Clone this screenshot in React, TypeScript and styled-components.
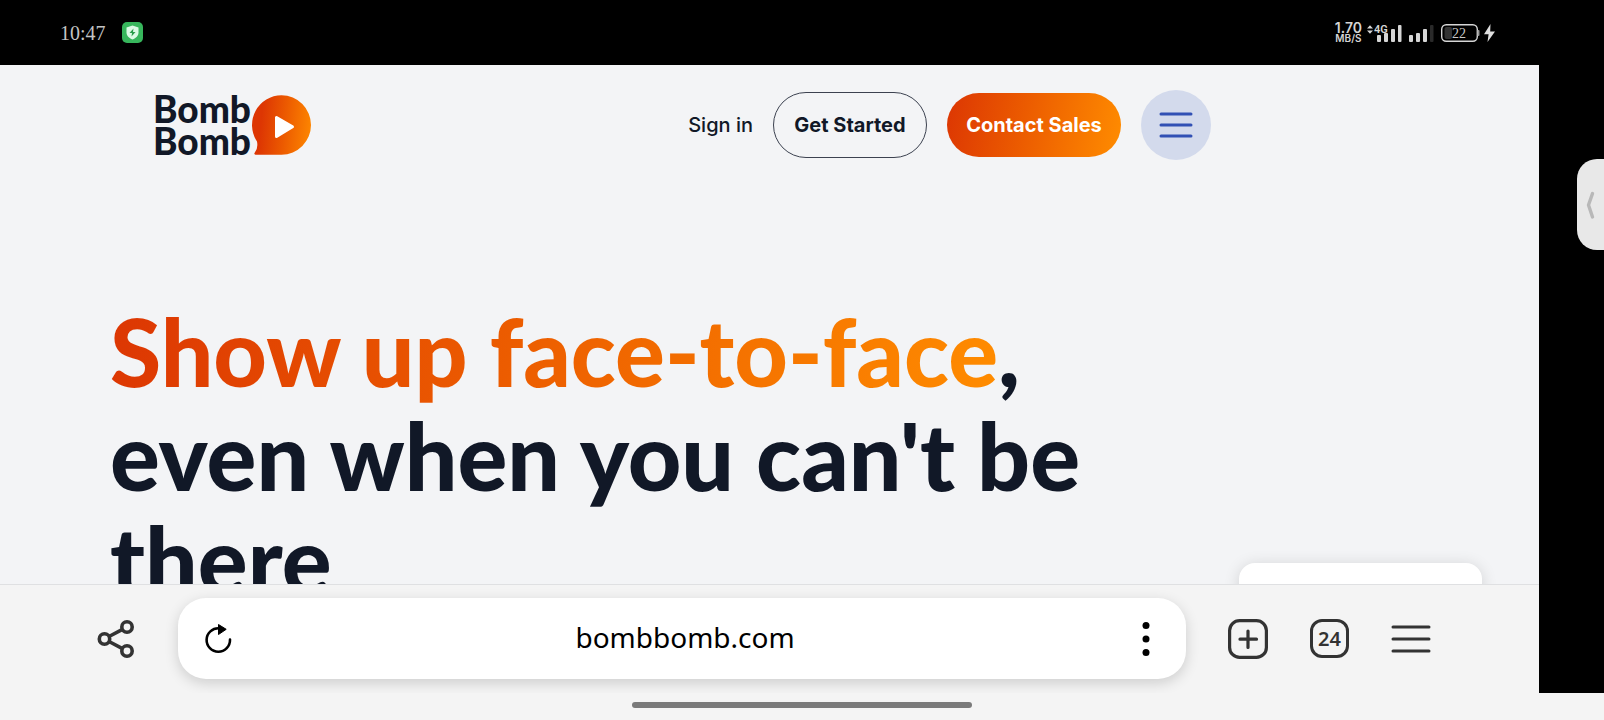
import React from "react";
import styled, { createGlobalStyle } from "styled-components";

const GlobalStyle = createGlobalStyle`
  *, *::before, *::after { box-sizing: border-box; }
  html, body { margin: 0; padding: 0; background: #f4f4f4; }
  button, input { font: inherit; color: inherit; }
  svg { display: block; flex: none; }
`;

const ink = "#111827";
const flame = "linear-gradient(100deg, #dc3603 0%, #ec5c00 45%, #ff8c00 100%)";

const Device = styled.div`
  display: flex;
  flex-direction: column;
  height: 100vh;
  min-height: 480px;
  overflow: hidden;
  background: #f4f4f4;
  font-family: "Noto Sans", sans-serif;
`;

const StatusBar = styled.header`
  flex: none;
  display: flex;
  align-items: center;
  justify-content: space-between;
  height: 65px;
  padding: 0 108px 0 60px;
  background: #000;
  color: #d4d4d4;
`;

const StatusGroup = styled.div<{ $gap: number }>`
  display: flex;
  align-items: center;
  gap: ${(p) => p.$gap}px;
`;

const Clock = styled.time`
  font: 20px/24px "Liberation Serif", serif;
  color: #c4c4c4;
`;

const Speed = styled.div`
  display: flex;
  flex-direction: column;
  align-items: center;
  font-family: Inter, sans-serif;
  font-weight: 600;
`;

const SpeedValue = styled.span`
  font-size: 14px;
  line-height: 11px;
`;

const SpeedUnit = styled.span`
  font-size: 10px;
  line-height: 10px;
`;

const Body = styled.div`
  flex: 1;
  display: flex;
  min-height: 0;
`;

const Browser = styled.div`
  flex: 1;
  display: flex;
  flex-direction: column;
  min-width: 0;
`;

const Rail = styled.aside`
  flex: none;
  display: flex;
  justify-content: flex-end;
  align-items: flex-start;
  width: 65px;
  padding-top: 94px;
  background: #000;
`;

const EdgeHandle = styled.button`
  display: flex;
  align-items: center;
  width: 27px;
  height: 91px;
  padding: 0 0 0 9px;
  border: 0;
  border-radius: 20px 0 0 20px;
  background: #e8e8e8;
`;

const Page = styled.main`
  flex: 1;
  position: relative;
  min-height: 0;
  overflow: hidden;
  background: #f3f4f6;
  color: ${ink};
`;

const SiteHeader = styled.div`
  display: flex;
  align-items: center;
  justify-content: space-between;
  max-width: 1211px;
  padding: 25px 0 0 153px;
`;

const Logo = styled.a`
  display: flex;
  align-items: center;
  gap: 2px;
  color: ${ink};
  text-decoration: none;
`;

const LogoText = styled.span`
  display: flex;
  flex-direction: column;
  width: 97px;
  font: 900 37px/32px Lato, sans-serif;
`;

const Nav = styled.nav`
  display: flex;
  align-items: center;
  gap: 20px;
  font: 500 20px/24px Inter, sans-serif;
`;

const NavLink = styled.a`
  color: ${ink};
  text-decoration: none;
`;

const Pill = styled.a<{ $filled?: boolean }>`
  display: flex;
  align-items: center;
  justify-content: center;
  width: ${(p) => (p.$filled ? 174 : 154)}px;
  height: ${(p) => (p.$filled ? 64 : 66)}px;
  border: ${(p) => (p.$filled ? "0" : "1px solid #3c4250")};
  border-radius: 33px;
  background: ${(p) => (p.$filled ? flame : "transparent")};
  color: ${(p) => (p.$filled ? "#fff" : ink)};
  font-weight: 700;
  text-decoration: none;
  white-space: nowrap;
`;

const MenuButton = styled.button`
  display: flex;
  align-items: center;
  justify-content: center;
  width: 70px;
  height: 70px;
  padding: 0;
  border: 0;
  border-radius: 50%;
  background: #d3daec;
`;

const Headline = styled.h1`
  max-width: 1140px;
  margin: 0;
  padding: 139px 0 0 110px;
  font: 900 93px/104px Lato, sans-serif;
`;

const Accent = styled.span`
  background: ${flame};
  background-clip: text;
  -webkit-background-clip: text;
  color: transparent;
`;

const ChatCard = styled.div`
  position: absolute;
  right: 57px;
  bottom: -79px;
  width: 243px;
  height: 100px;
  border-radius: 16px;
  background: #fff;
  box-shadow: 0 2px 16px rgba(0, 0, 0, 0.14);
`;

const Toolbar = styled.div`
  flex: none;
  display: flex;
  align-items: center;
  height: 109px;
  padding: 0 108px 1px 97px;
  border-top: 1px solid #dfe0e2;
  background: #f4f4f4;
  color: #333;
`;

const IconButton = styled.button`
  display: flex;
  align-items: center;
  justify-content: center;
  flex: none;
  padding: 0;
  border: 0;
  background: none;
`;

const AddressBar = styled.form`
  flex: 1;
  display: flex;
  align-items: center;
  min-width: 0;
  height: 81px;
  margin: 0 42px 0 43px;
  padding: 0 36px 0 27px;
  border-radius: 28px;
  background: #fff;
  color: #000;
  box-shadow: 0 4px 14px rgba(0, 0, 0, 0.16);
`;

const AddressInput = styled.input`
  flex: 1;
  min-width: 0;
  padding: 0 4px 4px 0;
  border: 0;
  outline: 0;
  background: none;
  font: 28px/40px "Noto Sans", sans-serif;
  text-align: center;
`;

const Actions = styled.div`
  display: flex;
  align-items: center;
  gap: 42px;
`;

const TabsButton = styled(IconButton)`
  width: 39px;
  height: 39px;
  border: 3px solid #333;
  border-radius: 12px;
  font: 600 20px/24px "Noto Sans", sans-serif;
`;

const HomeStrip = styled.footer`
  flex: none;
  display: flex;
  justify-content: center;
  height: 27px;
  padding-top: 9px;
  background: #f4f4f4;
`;

const HomeBar = styled.div`
  width: 340px;
  height: 6px;
  border-radius: 3px;
  background: #7a7a7a;
`;

const ShieldIcon = () => (
  <svg width="21" height="21" viewBox="0 0 21 21">
    <rect width="21" height="21" rx="5" fill="#37b65c" />
    <path d="M10.500 3.500 16.500 5.500V10.500C16.500 14 14 16 10.500 17.500 7 16 4.500 14 4.500 10.500V5.500Z" fill="#dcfbe6" />
    <path d="M11.500 6.500 7.500 11h2.500l-.5 3.500 4-4.500H11Z" fill="#2a9d4c" />
  </svg>
);

const SignalIcons = () => (
  <svg width="69" height="22" viewBox="0 0 69 22" fill="#d6d6d6">
    <path d="M0 6.500 3 3.200 6 6.500ZM0 8.500 3 11.800 6 8.500Z" />
    <text x="7" y="11" fontFamily="Roboto, sans-serif" fontWeight="600" fontSize="11">4G</text>
    <rect x="10" y="13" width="4" height="7" rx="1" />
    <rect x="17" y="11" width="4" height="9" rx="1" />
    <rect x="24" y="7" width="4" height="13" rx="1" />
    <rect x="31" y="3" width="3.500" height="17" rx="1" />
    <rect x="42" y="13" width="4" height="7" rx="1" />
    <rect x="49" y="11" width="4" height="9" rx="1" />
    <rect x="56" y="7" width="4" height="13" rx="1" />
    <rect x="63" y="3" width="3.500" height="17" rx="1" fill="#2a2a2a" />
  </svg>
);

const BatteryIcon = () => (
  <svg width="55" height="20" viewBox="0 0 55 20">
    <rect x="0.700" y="1.700" width="35.600" height="16.600" rx="4.500" fill="none" stroke="#d6d6d6" strokeWidth="1.400" />
    <rect x="3.500" y="4" width="7.500" height="12" rx="2" fill="#333" />
    <path d="M36.500 7h1q1 0 1 1v4q0 1-1 1h-1Z" fill="#9a9a9a" />
    <text x="11" y="14.500" fontFamily="Liberation Serif, serif" fontSize="14" fill="#c8c8c8">22</text>
    <path d="M49.500 1 43 11.200h4.600L46.500 19 54 8.600h-4.800Z" fill="#dedede" />
  </svg>
);

const BubbleIcon = () => (
  <svg width="59" height="60" viewBox="0 0 59 60">
    <defs>
      <linearGradient id="bubble" x1="0" y1="0.450" x2="1" y2="0.550">
        <stop offset="0.150" stopColor="#dd3603" />
        <stop offset="0.550" stopColor="#ec5a00" />
        <stop offset="1" stopColor="#fd8500" />
      </linearGradient>
    </defs>
    <path
      d="M29.500 0.300A29.500 29.700 0 0 1 29.500 59.700H3.500Q1.500 59.500 2.800 57.600Q6.300 53.500 5 46.500A29.500 29.700 0 0 1 29.500 0.300Z"
      fill="url(#bubble)"
    />
    <path d="M24.500 22.500V41.500L40.500 31.800Z" fill="#fff" stroke="#fff" strokeWidth="3" strokeLinejoin="round" />
  </svg>
);

const BurgerIcon = ({ width, gap, weight, color }: { width: number; gap: number; weight: number; color: string }) => (
  <svg width={width} height={gap * 2 + 4} viewBox={`0 0 ${width} ${gap * 2 + 4}`} stroke={color} strokeWidth={weight} strokeLinecap="round">
    <path d={`M2 2H${width - 2}M2 ${gap + 2}H${width - 2}M2 ${gap * 2 + 2}H${width - 2}`} />
  </svg>
);

const ShareIcon = () => (
  <svg width="38" height="38" viewBox="0 0 38 38" fill="none" stroke="#333" strokeWidth="3.600">
    <circle cx="7.500" cy="19" r="5.200" />
    <circle cx="30" cy="7" r="5.200" />
    <circle cx="30" cy="31" r="5.200" />
    <path d="M12 16.500 25.500 9.300M12 21.500 25.500 28.700" />
  </svg>
);

const ReloadIcon = () => (
  <svg width="27" height="30" viewBox="0 0 27 30">
    <path d="M14 4.300A11.700 11.700 0 1 0 25 15.600" fill="none" stroke="#000" strokeWidth="2.600" strokeLinecap="round" />
    <path d="M13.500 0.500 21.200 5.300 13.500 10.500Z" fill="#000" stroke="#000" strokeLinejoin="round" />
  </svg>
);

const DotsIcon = () => (
  <svg width="8" height="36" viewBox="0 0 8 36">
    <circle cx="4" cy="4.500" r="3.500" />
    <circle cx="4" cy="18" r="3.500" />
    <circle cx="4" cy="31.500" r="3.500" />
  </svg>
);

const NewTabIcon = () => (
  <svg width="40" height="40" viewBox="0 0 40 40" fill="none" stroke="#333" strokeWidth="3.200" strokeLinecap="round">
    <rect x="1.600" y="1.600" width="36.800" height="36.800" rx="10" />
    <path d="M20 12V28.500M12 20.200H28.500" />
  </svg>
);

const ChevronIcon = () => (
  <svg width="10" height="30" viewBox="0 0 10 30" fill="none" stroke="#b8b8b8" strokeWidth="3.400" strokeLinecap="round" strokeLinejoin="round">
    <path d="M6.500 3.500 2.500 15 6.500 27" />
  </svg>
);

export default function App() {
  return (
    <Device>
      <GlobalStyle />
      <StatusBar>
        <StatusGroup $gap={16}>
          <Clock>10:47</Clock>
          <ShieldIcon />
        </StatusGroup>
        <StatusGroup $gap={5}>
          <Speed>
            <SpeedValue>1.70</SpeedValue>
            <SpeedUnit>MB/S</SpeedUnit>
          </Speed>
          <SignalIcons />
          <BatteryIcon />
        </StatusGroup>
      </StatusBar>
      <Body>
        <Browser>
          <Page>
            <SiteHeader>
              <Logo href="#home">
                <LogoText>
                  <span>Bomb</span>
                  <span>Bomb</span>
                </LogoText>
                <BubbleIcon />
              </Logo>
              <Nav>
                <NavLink href="#sign-in">Sign in</NavLink>
                <Pill href="#get-started">Get Started</Pill>
                <Pill href="#contact" $filled>Contact Sales</Pill>
                <MenuButton type="button" aria-label="Menu">
                  <BurgerIcon width={34} gap={11} weight={3} color="#3150b4" />
                </MenuButton>
              </Nav>
            </SiteHeader>
            <Headline>
              <Accent>Show up face-to-face</Accent>,<br />
              even when you can't be<br />
              there
            </Headline>
            <ChatCard />
          </Page>
          <Toolbar>
            <IconButton type="button" aria-label="Share"><ShareIcon /></IconButton>
            <AddressBar>
              <IconButton type="button" aria-label="Reload"><ReloadIcon /></IconButton>
              <AddressInput type="text" aria-label="Address" defaultValue="bombbomb.com" />
              <IconButton type="button" aria-label="Page options"><DotsIcon /></IconButton>
            </AddressBar>
            <Actions>
              <IconButton type="button" aria-label="New tab"><NewTabIcon /></IconButton>
              <TabsButton type="button" aria-label="Open tabs">24</TabsButton>
              <IconButton type="button" aria-label="Browser menu">
                <BurgerIcon width={40} gap={12} weight={3} color="#333" />
              </IconButton>
            </Actions>
          </Toolbar>
        </Browser>
        <Rail>
          <EdgeHandle type="button" aria-label="Open side panel"><ChevronIcon /></EdgeHandle>
        </Rail>
      </Body>
      <HomeStrip><HomeBar /></HomeStrip>
    </Device>
  );
}
